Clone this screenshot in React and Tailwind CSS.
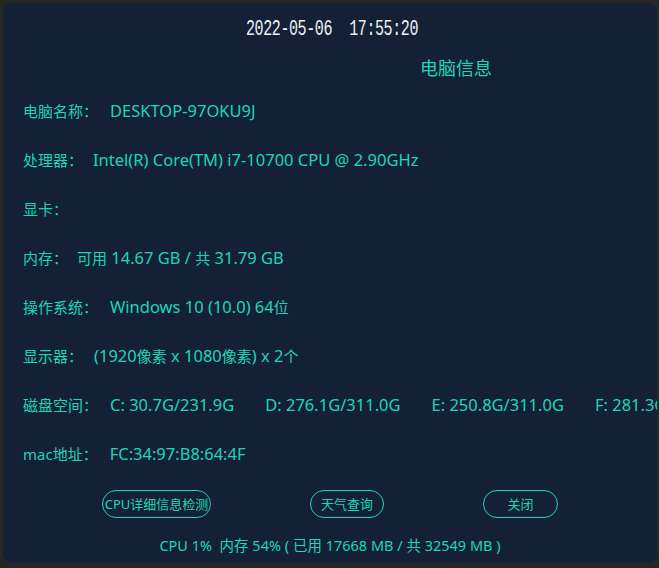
import React from 'react';

// CJK runs stay at 15px, latin runs are drawn a little larger (like YaHei's latin)
const Mixed = ({ text }) => {
  const parts = text.match(/[\u4e00-\u9fff\uff08-\uff1a]+|[^\u4e00-\u9fff\uff08-\uff1a]+/g) || [];
  return (
    <>
      {parts.map((p, i) =>
        /[\u4e00-\u9fff]/.test(p) ? (
          <span key={i} className="text-[15px]">{p}</span>
        ) : (
          <span key={i} className="text-[16.5px]">{p}</span>
        )
      )}
    </>
  );
};

const rows = [
  { label: '电脑名称：', value: 'DESKTOP-97OKU9J', gap: 'ml-[12px]' },
  { label: '处理器：', value: 'Intel(R) Core(TM) i7-10700 CPU @ 2.90GHz', gap: 'ml-[10px]' },
  { label: '显卡：', value: '', gap: 'ml-[10px]' },
  { label: '内存：', value: '可用 14.67 GB / 共 31.79 GB', gap: 'ml-[9px]' },
  { label: '操作系统：', value: 'Windows 10 (10.0) 64位', gap: 'ml-[12px]' },
  { label: '显示器：', value: '(1920像素 x 1080像素) x 2个', gap: 'ml-[11px]' },
];

const disks = ['C: 30.7G/231.9G', 'D: 276.1G/311.0G', 'E: 250.8G/311.0G', 'F: 281.3G/311.0G'];

const App = () => {
  return (
    <div className="h-[568px] w-[659px] bg-[#262626] p-[3px] font-['Noto_Sans','Noto_Sans_CJK_SC',sans-serif]">
      <div className="flex h-[560px] w-[654px] flex-col overflow-hidden rounded-[9px] bg-[#142036] pt-[14px] text-[#1cd6b6]">
        {/* clock */}
        <div className="flex h-[24px] items-center justify-center pl-[4px]">
          <span className="scale-y-[1.5] font-['Liberation_Mono',monospace] text-[15px] leading-none tracking-[-0.4px] text-[#eef2f5]">
            2022-05-06&nbsp;&nbsp;17:55:20
          </span>
        </div>

        <div className="mt-[15px] flex h-[24px] items-center pl-[417px] text-[18px] leading-none">电脑信息</div>

        <div className="mt-[7px] flex flex-col pl-[20px] text-[15px] leading-none">
          {rows.map((r) => (
            <div key={r.label} className="flex h-[49px] items-center whitespace-pre">
              <span>{r.label}</span>
              <span className={r.gap}>
                <Mixed text={r.value} />
              </span>
            </div>
          ))}
          <div className="flex h-[49px] items-center whitespace-nowrap">
            <span>磁盘空间：</span>
            <div className="ml-[12px] flex gap-[31px] text-[16.5px]">
              {disks.map((d) => (
                <span key={d}>{d}</span>
              ))}
            </div>
          </div>
          <div className="flex h-[49px] items-center whitespace-nowrap">
            <span>mac地址：</span>
            <span className="ml-[12px] text-[16.5px]">FC:34:97:B8:64:4F</span>
          </div>
        </div>

        {/* buttons */}
        <div className="mt-[11px] flex justify-center gap-[99px] whitespace-nowrap text-[13px] leading-none">
          <button className="h-[28px] w-[109px] rounded-full border border-[#1cd6b6] px-0 text-[#1cd6b6]">CPU详细信息检测</button>
          <button className="h-[28px] w-[74px] rounded-full border border-[#1cd6b6] text-[#1cd6b6]">天气查询</button>
          <button className="h-[28px] w-[75px] rounded-full border border-[#1cd6b6] text-[#1cd6b6]">关闭</button>
        </div>

        <div className="mt-[17px] flex h-[20px] items-center justify-center whitespace-pre text-[14.5px] leading-none">
          CPU 1%  内存 54% ( 已用 17668 MB / 共 32549 MB )
        </div>
      </div>
    </div>
  );
};

export default App;
